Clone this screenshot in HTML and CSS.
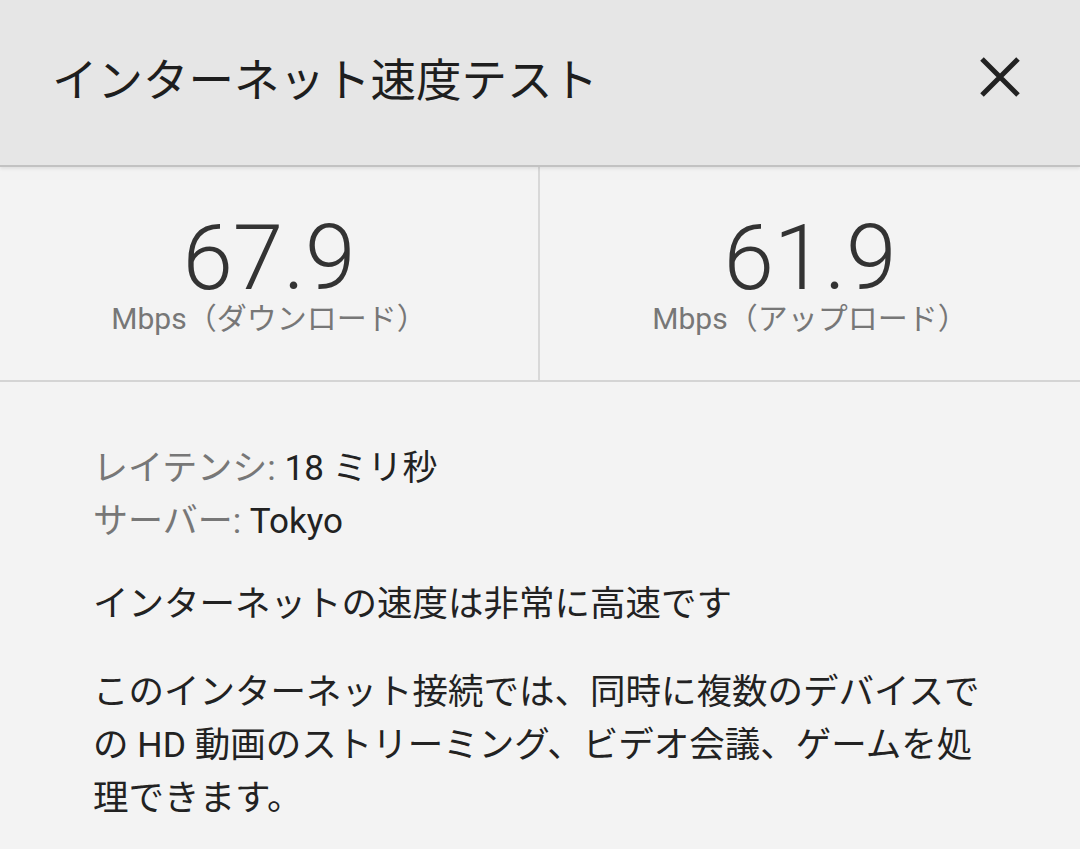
FILE: index.html
```html
<!DOCTYPE html>
<html lang="ja">
<head>
<meta charset="utf-8">
<title>インターネット速度テスト</title>
<link rel="stylesheet" href="styles.css">
</head>
<body>
<div class="page">
  <header class="header">
    <h1 class="title">インターネット速度テスト</h1>
    <button class="close" aria-label="閉じる">
      <svg viewBox="0 0 44 44" width="44" height="44"><path d="M4 4 L40 40 M40 4 L4 40" stroke="#222" stroke-width="5" fill="none"/></svg>
    </button>
  </header>
  <section class="stats">
    <div class="stat stat-left">
      <div class="num">67.9</div>
      <div class="unit">Mbps（ダウンロード）</div>
    </div>
    <div class="stat">
      <div class="num">61.9</div>
      <div class="unit">Mbps（アップロード）</div>
    </div>
  </section>
  <section class="details">
    <div class="meta">
      <div class="row"><span class="lbl">レイテンシ:</span> <span class="val">18 ミリ秒</span></div>
      <div class="row"><span class="lbl">サーバー:</span> <span class="val">Tokyo</span></div>
    </div>
    <p class="summary">インターネットの速度は非常に高速です</p>
    <p class="desc">このインターネット接続では、同時に複数のデバイスでの HD 動画のストリーミング、ビデオ会議、ゲームを処理できます。</p>
  </section>
</div>
</body>
</html>
```
FILE: styles.css
```css
html, body {
  margin: 0;
  padding: 0;
}
body {
  background: #f3f3f3;
  font-family: "Roboto", "Noto Sans CJK JP", sans-serif;
  color: #222;
  width: 1080px;
  height: 849px;
  overflow: hidden;
}
.header {
  height: 167px;
  box-sizing: border-box;
  background: #e6e6e6;
  border-bottom: 2px solid #c2c2c2;
  box-shadow: 0 2px 3px rgba(0,0,0,0.08);
  display: flex;
  align-items: center;
  justify-content: space-between;
  padding: 0 58px 12px 52px;
  position: relative;
}
.title {
  margin: 0;
  font-weight: 400;
  font-size: 45.5px;
  color: #1e1e1e;
  font-family: "Noto Sans CJK JP", sans-serif;
}
.close {
  background: none;
  border: none;
  padding: 0;
  width: 44px;
  height: 44px;
  display: flex;
}
.stats {
  display: grid;
  grid-template-columns: 1fr 1fr;
  height: 215px;
  box-sizing: border-box;
  border-bottom: 2px solid #d4d4d4;
}
.stat {
  display: flex;
  flex-direction: column;
  align-items: center;
  padding-top: 50px;
}
.stat-left {
  border-right: 2px solid #d8d8d8;
}
.num {
  font-family: "Roboto", sans-serif;
  font-weight: 300;
  font-size: 91px;
  line-height: 82px;
  color: #333;
}
.unit {
  font-size: 30px;
  line-height: 40px;
  color: #777;
  font-family: "Roboto", "Noto Sans CJK JP", sans-serif;
}
.details {
  padding: 60px 80px 0 93px;
  font-size: 35.5px;
}
.meta .row {
  line-height: 53px;
  font-size: 35px;
}
.lbl {
  color: #777;
}
.val {
  color: #222;
}
.summary {
  margin: 30px 0 0;
  line-height: 53px;
  color: #222;
}
.desc {
  margin: 35px 0 0;
  line-height: 53px;
  color: #222;
}
```
